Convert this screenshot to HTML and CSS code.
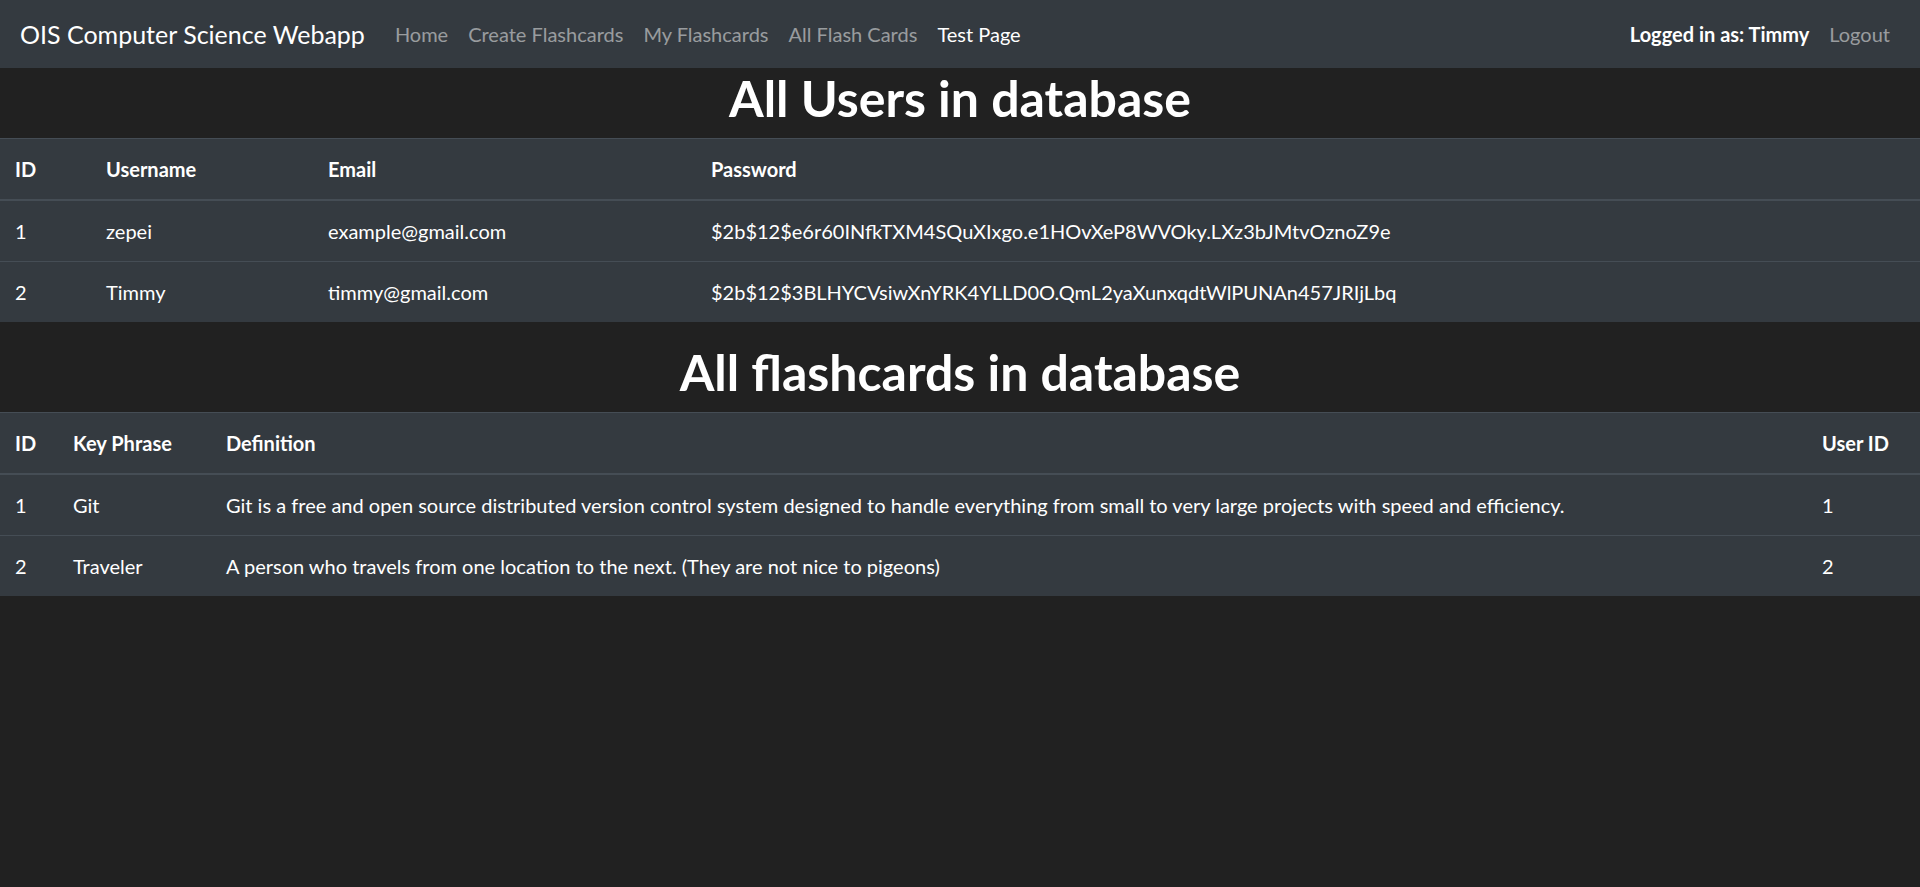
FILE: index.html
```html
<!DOCTYPE html>
<html lang="en">
<head>
<meta charset="utf-8">
<title>OIS Computer Science Webapp</title>
<link rel="stylesheet" href="styles.css">
</head>
<body>
<nav class="navbar">
  <a class="brand" href="#">OIS Computer Science Webapp</a>
  <ul class="nav-left">
    <li><a class="nav-link" href="#">Home</a></li>
    <li><a class="nav-link" href="#">Create Flashcards</a></li>
    <li><a class="nav-link" href="#">My Flashcards</a></li>
    <li><a class="nav-link" href="#">All Flash Cards</a></li>
    <li><a class="nav-link active" href="#">Test Page</a></li>
  </ul>
  <ul class="nav-right">
    <li><span class="nav-text">Logged in as: Timmy</span></li>
    <li><a class="nav-link" href="#">Logout</a></li>
  </ul>
</nav>

<h1 class="title">All Users in database</h1>
<table class="data-table">
  <colgroup>
    <col class="u-id">
    <col class="u-name">
    <col class="u-email">
    <col class="u-pass">
  </colgroup>
  <thead>
    <tr><th>ID</th><th>Username</th><th>Email</th><th>Password</th></tr>
  </thead>
  <tbody>
    <tr><td>1</td><td>zepei</td><td>example@gmail.com</td><td>$2b$12$e6r60INfkTXM4SQuXIxgo.e1HOvXeP8WVOky.LXz3bJMtvOznoZ9e</td></tr>
    <tr><td>2</td><td>Timmy</td><td>timmy@gmail.com</td><td>$2b$12$3BLHYCVsiwXnYRK4YLLD0O.QmL2yaXunxqdtWlPUNAn457JRIjLbq</td></tr>
  </tbody>
</table>

<h1 class="title">All flashcards in database</h1>
<table class="data-table">
  <colgroup>
    <col class="f-id">
    <col class="f-key">
    <col class="f-def">
    <col class="f-user">
  </colgroup>
  <thead>
    <tr><th>ID</th><th>Key Phrase</th><th>Definition</th><th>User ID</th></tr>
  </thead>
  <tbody>
    <tr><td>1</td><td>Git</td><td>Git is a free and open source distributed version control system designed to handle everything from small to very large projects with speed and efficiency.</td><td>1</td></tr>
    <tr><td>2</td><td>Traveler</td><td>A person who travels from one location to the next. (They are not nice to pigeons)</td><td>2</td></tr>
  </tbody>
</table>
</body>
</html>
```
FILE: styles.css
```css
* { box-sizing: border-box; }

html, body {
  margin: 0;
  padding: 0;
}

body {
  background: #212121;
  color: #fff;
  font-family: "Segoe UI", Lato, "Liberation Sans", sans-serif;
  font-size: 20px;
  line-height: 1.5;
}

a { text-decoration: none; }

.navbar {
  display: flex;
  align-items: center;
  height: 68px;
  padding: 0 20px;
  background: #343a40;
}

.brand {
  color: #fff;
  font-size: 25px;
  line-height: 37px;
  padding: 6px 0;
  margin-right: 20px;
  white-space: nowrap;
}

.nav-left,
.nav-right {
  display: flex;
  align-items: center;
  list-style: none;
  margin: 0;
  padding: 0;
}

.nav-right { margin-left: auto; }

.nav-link,
.nav-text {
  display: block;
  padding: 10px;
  color: rgba(255, 255, 255, 0.5);
  white-space: nowrap;
}

.nav-link.active { color: #fff; }

.nav-text {
  color: #fff;
  font-weight: 700;
}

.title {
  margin: 0 0 10px;
  font-size: 50px;
  line-height: 60px;
  font-weight: 700;
  text-align: center;
}

.data-table {
  width: 100%;
  table-layout: fixed;
  border-collapse: collapse;
  background: #343a40;
  color: #fff;
  margin-bottom: 20px;
}

.data-table th,
.data-table td {
  padding: 15px;
  text-align: left;
  vertical-align: top;
  border-top: 1px solid #454d55;
  white-space: nowrap;
}

.data-table th {
  font-weight: 700;
  border-bottom: 2px solid #454d55;
}

.u-id { width: 91px; }
.u-name { width: 222px; }
.u-email { width: 383px; }

.f-id { width: 58px; }
.f-key { width: 153px; }
.f-user { width: 113px; }
```
